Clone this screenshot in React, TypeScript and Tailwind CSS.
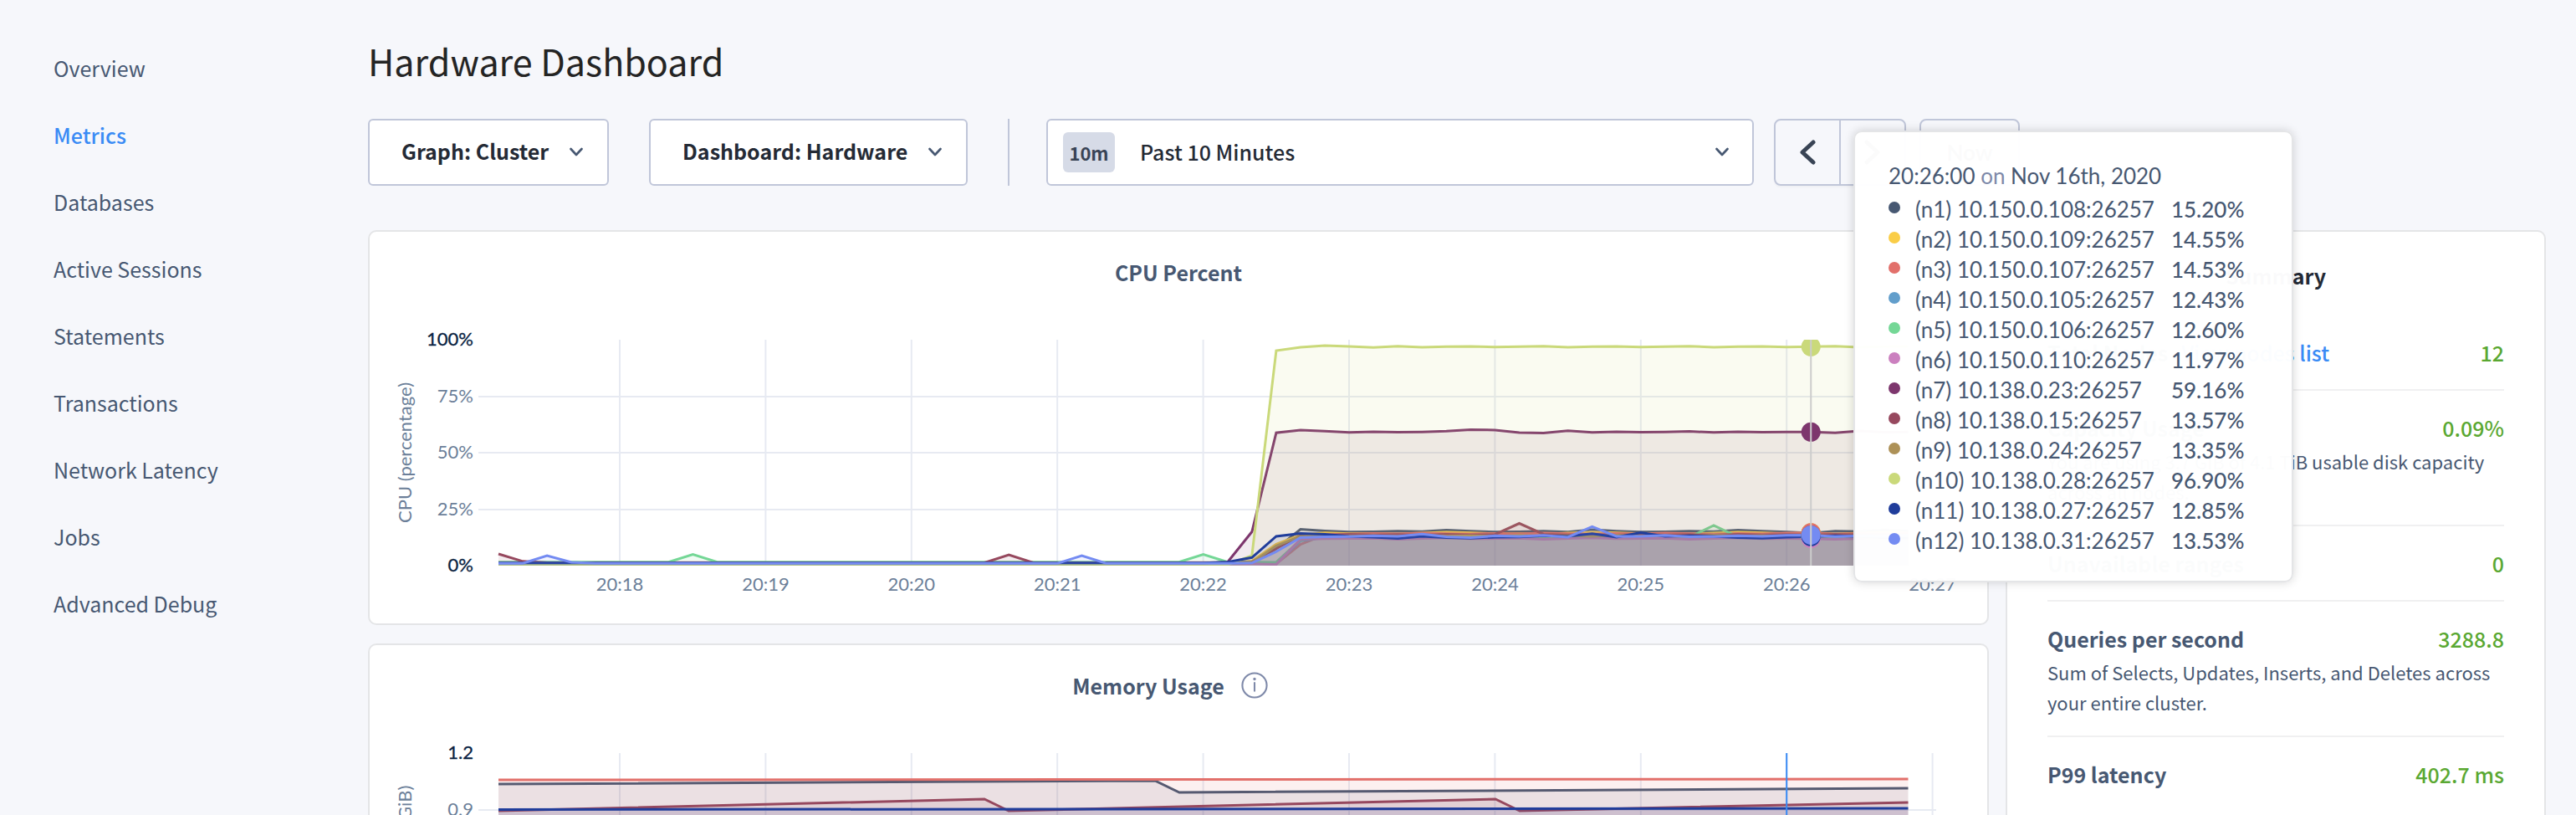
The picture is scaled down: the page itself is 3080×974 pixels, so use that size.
import type { ReactNode } from "react";

const SANS = "font-['Noto_Sans_CJK_SC','Open_Sans',sans-serif]";
const LATO = "font-['Lato',sans-serif]";

const NAV = [
  "Overview",
  "Metrics",
  "Databases",
  "Active Sessions",
  "Statements",
  "Transactions",
  "Network Latency",
  "Jobs",
  "Advanced Debug",
];

type Series = {
  name: string;
  color: string;
  value: number;
  idle: number;
  ramp: Record<number, number>;
  load: number[];
};

const SERIES: Series[] = [
  { name: "(n1) 10.150.0.108:26257", color: "#475872", value: 15.2, idle: 1, ramp: { 31: 1.4, 32: 7.5, 33: 16.1, 34: 15.4, 44: 14.9, 45: 15.9, 54: 14.4 }, load: [15.0, 15.3, 15.1, 15.7, 15.3, 14.9] },
  { name: "(n2) 10.150.0.109:26257", color: "#facd47", value: 14.55, idle: 1.2, ramp: { 31: 2, 32: 9.5, 33: 13.6 }, load: [14.2, 14.0, 14.4, 14.8, 14.5, 14.2] },
  { name: "(n3) 10.150.0.107:26257", color: "#e2706b", value: 14.53, idle: 1.4, ramp: { 31: 1.3, 32: 0.8, 33: 9.4, 34: 13.8 }, load: [14.0, 14.3, 14.1, 14.4, 14.2] },
  { name: "(n4) 10.150.0.105:26257", color: "#629ecb", value: 12.43, idle: 0.9, ramp: { 31: 1, 32: 0.9, 33: 11.0, 34: 12.4 }, load: [12.6, 12.4, 12.8, 12.3] },
  { name: "(n5) 10.150.0.106:26257", color: "#74d796", value: 12.6, idle: 1.6, ramp: { 8: 5, 29: 5, 31: 1.6, 32: 1.5, 33: 11.4, 34: 12.6, 50: 17.8 }, load: [12.9, 12.6, 13.0, 12.7] },
  { name: "(n6) 10.150.0.110:26257", color: "#cb80bf", value: 11.97, idle: 0.8, ramp: { 31: 0.8, 32: 0.5, 33: 11.7 }, load: [12.1, 11.7, 12.0, 12.3, 11.9, 12.0] },
  { name: "(n7) 10.138.0.23:26257", color: "#7d366d", value: 59.16, idle: 1, ramp: { 30: 1.6, 31: 15, 32: 58.8, 33: 60, 34: 59.5, 39: 59.5, 40: 60.2, 41: 60, 42: 58.9, 43: 58.7, 44: 59.7, 55: 58.8, 56: 59.6 }, load: [59.0, 59.3, 59.1, 59.2, 59.4] },
  { name: "(n8) 10.138.0.15:26257", color: "#96485e", value: 13.57, idle: 1.3, ramp: { 0: 5.2, 1: 1.9, 21: 4.8, 31: 1.6, 32: 7.6, 33: 13.2, 42: 18.7 }, load: [13.6, 13.8, 13.5, 13.9] },
  { name: "(n9) 10.138.0.24:26257", color: "#ad9157", value: 13.35, idle: 1.1, ramp: { 31: 1.4, 32: 8.8, 33: 13.0 }, load: [13.2, 13.0, 13.4, 13.1] },
  { name: "(n10) 10.138.0.28:26257", color: "#cad97a", value: 96.9, idle: 0.4, ramp: { 31: 4.5, 32: 95.2, 33: 96.7, 34: 97.4, 35: 97, 36: 96.6 }, load: [96.9, 97.1, 96.7, 96.9, 97.0, 96.8] },
  { name: "(n11) 10.138.0.27:26257", color: "#203d9b", value: 12.85, idle: 1.2, ramp: { 30: 1.6, 31: 3.6, 32: 13, 33: 14.3, 34: 13.9, 35: 13, 36: 12.6, 37: 12, 45: 14.2, 46: 12.6, 47: 14.6, 48: 13 }, load: [12.7, 13.2, 13.0, 12.4, 12.1, 12.6] },
  { name: "(n12) 10.138.0.31:26257", color: "#748bf2", value: 13.53, idle: 1, ramp: { 2: 4.4, 3: 1.5, 24: 4.4, 31: 1.2, 32: 6.2, 33: 12.4, 38: 14, 40: 12.4, 44: 12.6, 45: 17.3, 46: 13 }, load: [12.9, 13.2, 13.0, 13.4, 12.8] },
];

const LAST = 58;
const HOVER = 54;
const X0 = 154;
const STEP = 29.06;
const TOP = 26;
const BOTTOM = 296;
const px = (i: number) => X0 + i * STEP;
const py = (v: number) => BOTTOM - (v / 100) * (BOTTOM - TOP);

const values = (s: Series) =>
  Array.from({ length: LAST + 1 }, (_, i) => {
    if (s.ramp[i] !== undefined) return s.ramp[i];
    if (i === HOVER) return s.value;
    return i <= 31 ? s.idle : s.load[i % s.load.length];
  });

const MINUTES = ["20:18", "20:19", "20:20", "20:21", "20:22", "20:23", "20:24", "20:25", "20:26", "20:27"];
const minuteX = (i: number) => 299 + i * 174.4;

function Trace({ points, color, bottom }: { points: string; color: string; bottom: number }) {
  return (
    <g>
      <path d={`M${X0},${bottom} L${points} L${px(LAST)},${bottom} Z`} fill={color} fillOpacity="0.1" />
      <path d={`M${points}`} fill="none" stroke={color} strokeWidth="3" />
    </g>
  );
}

function CpuChart() {
  return (
    <svg viewBox="0 0 1934 365" className={`block h-auto w-full ${LATO}`} role="img" aria-label="CPU Percent">
      <clipPath id="cpu-plot">
        <rect x="130" y={TOP} width="1750" height={BOTTOM - TOP} />
      </clipPath>
      <g stroke="#e7eaf2" strokeWidth="2">
        {[94, 161, 229].map((y) => (
          <path key={y} d={`M130,${y} H1873`} />
        ))}
        {MINUTES.map((m, i) => (
          <path key={m} d={`M${minuteX(i)},${TOP} V${BOTTOM}`} />
        ))}
      </g>
      <g clipPath="url(#cpu-plot)">
        {SERIES.map((s) => (
          <Trace
            key={s.name}
            color={s.color}
            bottom={BOTTOM}
            points={values(s).map((v, i) => `${px(i)},${py(v)}`).join(" L")}
          />
        ))}
        {SERIES.map((s) => (
          <circle key={s.name} cx={px(HOVER)} cy={py(values(s)[HOVER])} r="11.5" fill={s.color} />
        ))}
        <path d={`M${px(HOVER)},${TOP} V${BOTTOM}`} stroke="#cccccc" strokeWidth="2" />
      </g>
      <g fontSize="22" textAnchor="end">
        <text x="124" y="33" fill="#0a2342" stroke="#0a2342" strokeWidth="0.3">100%</text>
        <text x="124" y="101" fill="#6c7f99">75%</text>
        <text x="124" y="168" fill="#6c7f99">50%</text>
        <text x="124" y="236" fill="#6c7f99">25%</text>
        <text x="124" y="303" fill="#0a2342" stroke="#0a2342" strokeWidth="0.3">0%</text>
      </g>
      <g fontSize="22" textAnchor="middle" fill="#6c7f99">
        {MINUTES.map((m, i) => (
          <text key={m} x={minuteX(i)} y="326">{m}</text>
        ))}
        <text transform="translate(50 161) rotate(-90)">CPU (percentage)</text>
      </g>
    </svg>
  );
}

function MemoryChart() {
  const end = px(LAST);
  return (
    <svg viewBox="0 0 1934 365" className={`block h-auto w-full ${LATO}`} role="img" aria-label="Memory Usage">
      <g stroke="#e7eaf2" strokeWidth="2">
        {[94, 161, 229].map((y) => (
          <path key={y} d={`M130,${y} H1873`} />
        ))}
        {MINUTES.map((m, i) => (
          <path key={m} d={`M${minuteX(i)},${TOP} V${BOTTOM}`} />
        ))}
      </g>
      <Trace color="#475872" bottom={BOTTOM} points={`${X0},63 L939,59 L968,73 L${end},68`} />
      <Trace color="#e2706b" bottom={BOTTOM} points={`${X0},58 L${end},57`} />
      <Trace color="#96485e" bottom={BOTTOM} points={`${X0},95 L735,81 L764,95 L1346,81 L1375,95 L${end},85`} />
      <Trace color="#203d9b" bottom={BOTTOM} points={`${X0},93.5 L${end},92`} />
      <path d={`M${minuteX(8)},${TOP} V${BOTTOM}`} stroke="#3a8bf5" strokeWidth="2" />
      <g fontSize="22" textAnchor="end">
        <text x="124" y="33" fill="#0a2342" stroke="#0a2342" strokeWidth="0.3">1.2</text>
        <text x="124" y="101" fill="#6c7f99">0.9</text>
        <text x="124" y="168" fill="#6c7f99">0.6</text>
      </g>
      <text transform="translate(50 161) rotate(-90)" fontSize="22" textAnchor="middle" fill="#6c7f99">
        memory usage (GiB)
      </text>
    </svg>
  );
}

function Chevron() {
  return (
    <svg viewBox="0 0 16 12" className="pointer-events-none h-3 w-4 shrink-0" aria-hidden="true">
      <path d="M1.5,2 L8,9 L14.5,2" fill="none" stroke="#475872" strokeWidth="2.6" strokeLinecap="round" strokeLinejoin="round" />
    </svg>
  );
}

function Arrow({ flip }: { flip?: boolean }) {
  return (
    <svg viewBox="0 0 20 32" className={flip ? "h-8 w-5 rotate-180" : "h-8 w-5"} aria-hidden="true">
      <path d="M17,4 L4,16 L17,28" fill="none" stroke="#394455" strokeWidth="5" strokeLinecap="round" strokeLinejoin="round" />
    </svg>
  );
}

function Dropdown({ label, value }: { label: string; value: string }) {
  return (
    <label className="flex h-20 items-center gap-6 rounded-md border-2 border-[#c0c6d9] bg-white pr-[29px] pl-[38px]">
      <select aria-label={label} className="h-10 appearance-none bg-transparent pb-1 text-[25px] font-bold text-[#242a35] outline-none">
        <option>{value}</option>
      </select>
      <Chevron />
    </label>
  );
}

function Card({ title, info, children }: { title: string; info?: boolean; children: ReactNode }) {
  return (
    <section className="relative rounded-[10px] border-2 border-[#e4e5e7] bg-white">
      <div className="flex items-center justify-center gap-5 pt-7.5 pb-[37px]">
        <h2 className="text-[25px] leading-9 font-bold text-[#475872]">{title}</h2>
        {info && (
          <svg viewBox="0 0 34 34" className="-my-2 mr-5 size-8" role="img" aria-label="More information">
            <circle cx="17" cy="17" r="15.5" fill="none" stroke="#7e89a9" strokeWidth="2.2" />
            <path d="M17,13 V25" stroke="#7e89a9" strokeWidth="2.2" />
            <circle cx="17" cy="9" r="1.8" fill="#7e89a9" />
          </svg>
        )}
      </div>
      {children}
    </section>
  );
}

function Tooltip() {
  return (
    <div
      role="tooltip"
      className={`absolute -top-[121px] -right-[366px] z-10 h-[540px] w-[526px] rounded-[10px] border-2 border-[#e4e5e7] bg-white/98 pt-[34px] pl-10 text-[26px] leading-9 text-[#475872] shadow-[0_0_12px_rgba(0,0,0,0.16)] ${LATO}`}
    >
      <p className="mb-1">
        20:26:00 <span className="text-[#7e89a9]">on</span> Nov 16th, 2020
      </p>
      <table className="border-collapse">
        <tbody>
          {SERIES.map((s) => (
            <tr key={s.name}>
              <td className="w-8 p-0">
                <svg viewBox="0 0 14 14" className="mb-1 size-3.5" aria-hidden="true">
                  <circle cx="7" cy="7" r="7" fill={s.color} />
                </svg>
              </td>
              <td className="p-0 pr-5">{s.name}</td>
              <td className="p-0 font-medium">{s.value.toFixed(2)}%</td>
            </tr>
          ))}
        </tbody>
      </table>
    </div>
  );
}

function Stat({ title, link, value, children }: { title: string; link?: string; value: string; children?: ReactNode }) {
  return (
    <div className="border-b-2 border-[#f0f0f1] py-6.5 text-[#475872] last:border-b-0">
      <div className="flex justify-between text-[25px] leading-9">
        <h3 className="font-bold">
          {title}
          {link && (
            <a href="#nodes" className="ml-4 font-medium text-[#3a8bf5]">
              {link}
            </a>
          )}
        </h3>
        <span className="font-medium text-[#5aa832]">{value}</span>
      </div>
      {children && <p className="mt-1 -mb-1 text-[22px] leading-9">{children}</p>}
    </div>
  );
}

export default function App() {
  return (
    <div className={`flex h-screen overflow-hidden bg-[#f6f7fb] ${SANS}`}>
      <nav className="w-110 shrink-0 pt-[41px] pl-16">
        <ul>
          {NAV.map((item) => (
            <li key={item} className="h-20 text-[25px] leading-20">
              <a
                href={`#${item.toLowerCase().replace(" ", "-")}`}
                aria-current={item === "Metrics" ? "page" : undefined}
                className={item === "Metrics" ? "font-medium text-[#3a8bf5]" : "text-[#475872]"}
              >
                {item}
              </a>
            </li>
          ))}
        </ul>
      </nav>
      <main className="min-w-0 flex-1 pr-9">
        <h1 className="pt-10 text-[43px] leading-16 text-[#242424]">Hardware Dashboard</h1>
        <div className="mt-9.5 flex items-center">
          <Dropdown label="Graph" value="Graph: Cluster" />
          <div className="w-12" />
          <Dropdown label="Dashboard" value="Dashboard: Hardware" />
          <div className="mr-11 ml-12 h-20 w-0.5 bg-[#c0c6d9]" />
          <label className="flex h-20 w-[846px] items-center rounded-md border-2 border-[#c0c6d9] bg-white pr-7 pl-4.5">
            <span className="flex h-12 w-[62px] items-center justify-center rounded-md bg-[#d6dbe7] text-[22px] font-bold text-[#394455]">
              10m
            </span>
            <select aria-label="Time range" className="ml-7.5 h-10 flex-1 appearance-none bg-transparent text-[25px] font-medium text-[#242a35] outline-none">
              <option>Past 10 Minutes</option>
            </select>
            <Chevron />
          </label>
          <div className="ml-6 flex h-20 rounded-lg border-2 border-[#c0c6d9] shadow-[0_2px_2px_rgba(0,0,0,0.03)]">
            <button aria-label="Previous period" className="flex w-[78px] items-center justify-center border-r-2 border-[#c0c6d9]">
              <Arrow />
            </button>
            <button aria-label="Next period" className="flex w-[76px] items-center justify-center">
              <Arrow flip />
            </button>
          </div>
          <button className={`ml-4 h-20 w-[120px] rounded-lg border-2 border-[#c0c6d9] text-[26px] font-bold text-[#394455] ${LATO}`}>
            Now
          </button>
        </div>
        <div className="mt-[53px] flex items-start gap-5">
          <div className="flex min-w-0 flex-1 flex-col gap-5.5">
            <Card title="CPU Percent">
              <CpuChart />
              <Tooltip />
            </Card>
            <Card title="Memory Usage" info>
              <MemoryChart />
            </Card>
          </div>
          <aside className="w-[646px] rounded-[10px] border-2 border-[#e4e5e7] bg-white px-12 pt-8.5 pb-40">
            <h2 className="mb-7.5 text-center text-[25px] leading-9 font-bold text-[#242a35]">Summary</h2>
            <Stat title="Total Nodes" link="View nodes list" value="12" />
            <Stat title="Capacity Usage" value="0.09%">
              You are using 3.7 GiB of 4.1 TiB usable disk capacity across all nodes.
            </Stat>
            <Stat title="Unavailable ranges" value="0" />
            <Stat title="Queries per second" value="3288.8">
              Sum of Selects, Updates, Inserts, and Deletes across your entire cluster.
            </Stat>
            <Stat title="P99 latency" value="402.7 ms" />
          </aside>
        </div>
      </main>
    </div>
  );
}
